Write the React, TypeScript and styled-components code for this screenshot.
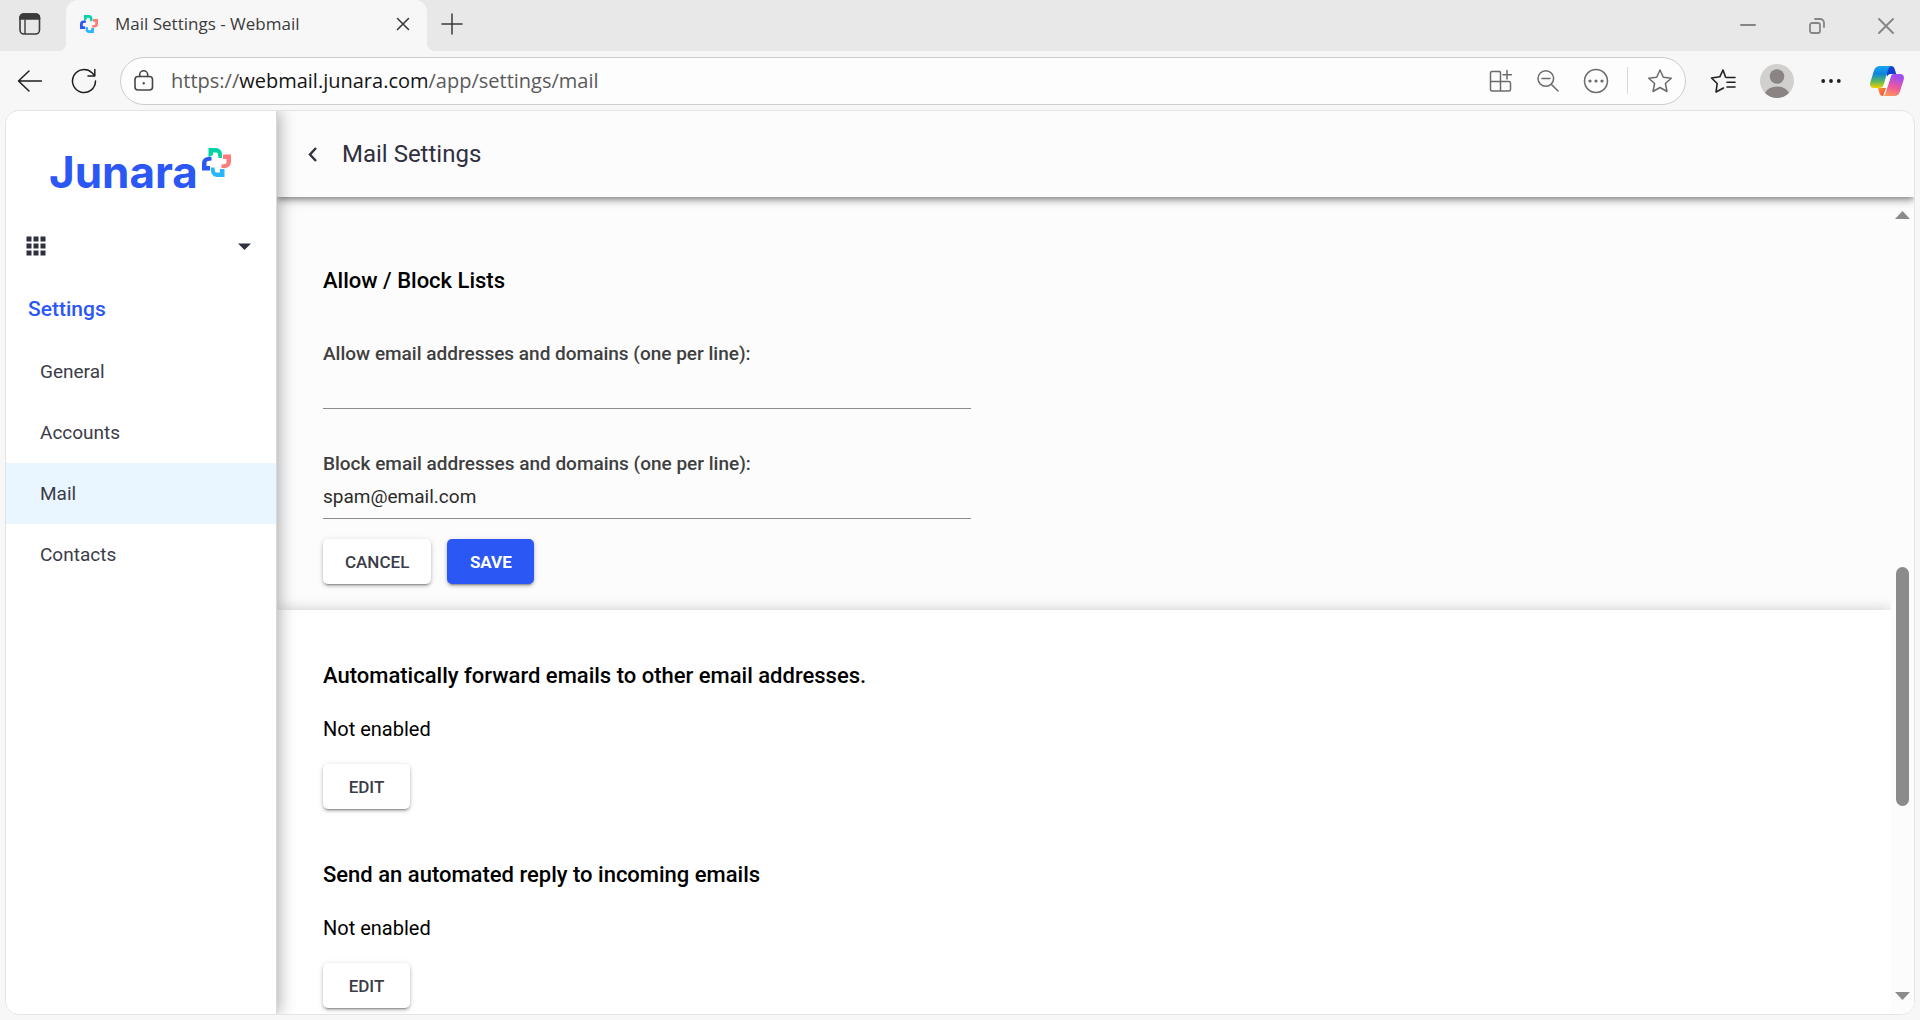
import React from "react";
import styled, { createGlobalStyle, css } from "styled-components";

const GlobalStyle = createGlobalStyle`
  *, *::before, *::after { box-sizing: border-box; }
  html, body, #root { height: 100%; }
  body {
    margin: 0;
    overflow: hidden;
    background: #f7f7f7;
    font-family: Roboto, "Liberation Sans", sans-serif;
    color: #000;
  }
  h1, h2, p { margin: 0; }
  button { font: inherit; border: 0; padding: 0; background: none; color: inherit; cursor: pointer; }
  svg { display: block; flex: none; }
`;

const chromeFont = css`
  font-family: "Open Sans", "Noto Sans", sans-serif;
`;

const Window = styled.div`
  display: flex;
  flex-direction: column;
  height: 100vh;
  background: #f7f7f7;
`;

/* ---------- tab strip ---------- */

const TabStrip = styled.div`
  display: flex;
  flex: none;
  height: 51px;
  background: #e8e8e8;
  color: #3b3b3b;
`;

const IconButton = styled.button<{ $width: number }>`
  display: flex;
  flex: none;
  align-items: center;
  justify-content: center;
  width: ${(p) => p.$width}px;
`;

const StripButton = styled(IconButton)`
  height: 47px;
`;

const TabCorner = styled.div<{ $side: "left" | "right" }>`
  align-self: flex-end;
  width: 8px;
  height: 8px;
  background: radial-gradient(
    circle at ${(p) => (p.$side === "left" ? "0 0" : "100% 0")},
    #e8e8e8 8px,
    #f7f7f7 8px
  );
`;

const Tab = styled.div`
  display: flex;
  align-items: center;
  width: 361px;
  padding: 0 16px 4px 14px;
  border-radius: 12px 12px 0 0;
  background: #f7f7f7;
`;

const TabTitle = styled.span`
  ${chromeFont}
  flex: 1;
  margin-left: 17px;
  font-size: 17px;
  line-height: 24px;
`;

const WindowControls = styled.div`
  display: flex;
  margin-left: auto;
  color: #858585;
`;

/* ---------- address bar ---------- */

const Toolbar = styled.div`
  display: flex;
  flex: none;
  align-items: center;
  height: 59px;
  padding-right: 4px;
  color: #1f1f1f;
`;

const AddressBar = styled.div`
  display: flex;
  flex: 1;
  align-items: center;
  height: 48px;
  margin: 0 10px;
  border: 1px solid #cdcdcd;
  border-radius: 24px;
  background: #fdfdfd;
  color: #6b6b6b;
`;

const SiteInfoButton = styled(IconButton)`
  color: #454545;
`;

const Url = styled.a`
  ${chromeFont}
  flex: 1;
  margin-left: 4px;
  color: #5a5a5a;
  font-size: 20px;
  line-height: 28px;
  text-decoration: none;
`;

const UrlHost = styled.span`
  color: #141414;
`;

const AddressDivider = styled.div`
  width: 1px;
  height: 27px;
  margin: 0 6px 0 7px;
  background: #d8d8d8;
`;

/* ---------- page frame ---------- */

const Page = styled.main`
  display: flex;
  flex: 1;
  min-height: 0;
  margin: 0 5px 5px;
  border: 1px solid #e4e4e4;
  border-radius: 14px;
  overflow: hidden;
  background: #fff;
`;

const Sidebar = styled.aside`
  position: relative;
  z-index: 3;
  flex: none;
  width: 271px;
  border-right: 1px solid #d9d9d9;
  background: #fff;
  box-shadow: 2px 0 16px rgba(0, 0, 0, 0.34);
`;

const Brand = styled.a`
  display: flex;
  align-items: center;
  gap: 4px;
  height: 110px;
  padding: 12px 0 0 43px;
  color: #2b57f4;
  text-decoration: none;
`;

const BrandName = styled.span`
  font-family: Inter, sans-serif;
  font-weight: 700;
  font-size: 44px;
  line-height: 52px;
`;

const BrandMark = styled.span`
  align-self: flex-start;
  padding-top: 25px;
`;

const AppSwitcher = styled.button`
  display: flex;
  align-items: center;
  justify-content: space-between;
  width: 100%;
  height: 50px;
  padding: 0 25px 0 20px;
  color: #2f303e;
`;

const SidebarTitle = styled.h2`
  padding: 23px 22px 0;
  color: #2b57f4;
  font-weight: 500;
  font-size: 21px;
  line-height: 30px;
`;

const Nav = styled.nav`
  margin-top: 17px;
`;

const NavItem = styled.a<{ $active?: boolean }>`
  display: flex;
  align-items: center;
  height: 61px;
  padding: 0 34px;
  background: ${(p) => (p.$active ? "#e9f6ff" : "transparent")};
  color: #3b3c49;
  font-size: 19px;
  line-height: 24px;
  text-decoration: none;
`;

const Content = styled.div`
  display: flex;
  flex: 1;
  flex-direction: column;
  min-width: 0;
`;

const Header = styled.header`
  position: relative;
  z-index: 2;
  display: flex;
  flex: none;
  align-items: center;
  height: 86px;
  padding: 0 20px;
  background: #fcfcfc;
  color: #2f303e;
  box-shadow: 0 3px 5px -1px rgba(0, 0, 0, 0.3), 0 5px 7px rgba(0, 0, 0, 0.14),
    0 1px 13px rgba(0, 0, 0, 0.12);
`;

const PageTitle = styled.h1`
  margin-left: 14px;
  font-weight: 400;
  font-size: 24px;
  line-height: 32px;
`;

const Scroller = styled.div`
  display: flex;
  flex: 1;
  min-height: 0;
  background: #fcfcfc;
`;

const Sections = styled.div`
  flex: 1;
  min-width: 0;
  overflow: hidden;
`;

const Editing = styled.form`
  padding: 68px 46px 26px;
`;

const SectionTitle = styled.h2`
  font-weight: 500;
  font-size: 22px;
  line-height: 32px;
`;

const Field = styled.div`
  display: flex;
  flex-direction: column;
  max-width: 648px;
  margin-top: 43px;

  & + & { margin-top: 41px; }
`;

const FieldLabel = styled.label`
  color: #3f3f3f;
  font-weight: 500;
  font-size: 19px;
  line-height: 28px;
`;

const FieldInput = styled.textarea`
  height: 41px;
  padding: 5px 0 7px;
  border: 0;
  border-bottom: 1px solid #8c8c8c;
  border-radius: 0;
  outline: 0;
  resize: none;
  overflow: hidden;
  background: transparent;
  color: #2b2b2b;
  font-family: inherit;
  font-size: 19px;
  line-height: 28px;
`;

const Actions = styled.div`
  display: flex;
  gap: 16px;
  margin-top: 20px;
`;

const Button = styled.button<{ $primary?: boolean }>`
  min-width: 87px;
  height: 45px;
  padding: 0 22px;
  border-radius: 5px;
  background: ${(p) => (p.$primary ? "#2b57f4" : "#fff")};
  color: ${(p) => (p.$primary ? "#fff" : "#3b3c49")};
  font-weight: ${(p) => (p.$primary ? 700 : 500)};
  font-size: 17px;
  line-height: 24px;
  text-transform: uppercase;
  box-shadow: 0 4px 1px -3px rgba(0, 0, 0, 0.2), 0 2px 3px rgba(0, 0, 0, 0.24),
    0 1px 6px rgba(0, 0, 0, 0.12);
`;

const Panel = styled.div`
  padding: 50px 46px 45px;
  background: #fff;
  box-shadow: 0 0 14px rgba(0, 0, 0, 0.2);
`;

const Setting = styled.section`
  & + & { margin-top: 50px; }
`;

const Status = styled.p`
  margin: 22px 0 20px;
  font-size: 20px;
  line-height: 30px;
`;

const Scrollbar = styled.div`
  position: relative;
  z-index: 1;
  display: flex;
  flex: none;
  flex-direction: column;
  align-items: center;
  width: 23px;
  padding: 14px 0;
  background: #fcfcfc;
  color: #8b8b8b;
`;

const ScrollTrack = styled.div`
  display: flex;
  flex: 1;
  flex-direction: column;
`;

const TrackSpace = styled.div<{ $weight: number }>`
  flex: ${(p) => p.$weight};
`;

const ScrollThumb = styled.div`
  flex: 239;
  width: 13px;
  border-radius: 7px;
  background: #8b8b8b;
`;

/* ---------- drawings ---------- */

const CrossMark = ({ size }: { size: number }) => (
  <svg width={size} height={size} viewBox="0 0 29 29" aria-hidden="true">
    <path fill="#05d3a5" d="M6.500 0h7.500a6 6 0 0 1 6 6v4h-3.500l-.5-4a1.500 1.500 0 0 0-1.500-1.500h-3.500V7L6.500 9.500z" />
    <path fill="#ff7a7a" d="M21 6.500h8V14a6 6 0 0 1-6 6h-3.500v-3.500l3.500-.5a1.500 1.500 0 0 0 1.500-1.500V11H21z" />
    <path fill="#29b6ff" d="M22.500 21v8H15a6 6 0 0 1-6-6v-3.500h3.500L13 23a1.500 1.500 0 0 0 1.500 1.500H18V21z" />
    <path fill="#2b57f4" d="M8 22.500H0V15a6 6 0 0 1 6-6h3.500v3.500L6 13a1.500 1.500 0 0 0-1.500 1.500V18H8z" />
  </svg>
);

const Stroke = ({
  size,
  width = 2,
  children,
}: {
  size: number;
  width?: number;
  children: React.ReactNode;
}) => (
  <svg
    width={size}
    height={size}
    viewBox={`0 0 ${size} ${size}`}
    fill="none"
    stroke="currentColor"
    strokeWidth={width}
    strokeLinecap="round"
    strokeLinejoin="round"
    aria-hidden="true"
  >
    {children}
  </svg>
);

const TabActionsIcon = () => (
  <Stroke size={24} width={1.6}>
    <rect x="3" y="2" width="19.500" height="20" rx="4" />
    <path d="M3 7V5.500A3.500 3.500 0 0 1 6.500 2h12.500A3.500 3.500 0 0 1 22.500 5.500V7z" fill="currentColor" />
    <path d="M8 8v13.500" strokeWidth="1.400" />
  </Stroke>
);

const BackIcon = () => (
  <Stroke size={26} width={1.5}>
    <path d="M25.500 13H2.500M13 3L2.500 13 13 23" />
  </Stroke>
);

const ReloadIcon = () => (
  <Stroke size={26} width={1.5}>
    <path d="M24.500 13a11.500 11.500 0 1 1-3.500-8.200L23.500 7.500M23.800 1.500V8h-6.800" />
  </Stroke>
);

const LockIcon = () => (
  <Stroke size={22} width={1.6}>
    <rect x="2" y="6.500" width="17.500" height="13.500" rx="3" />
    <path d="M6.700 6.500V4.800a4 4 0 0 1 8 0v1.700" />
    <circle cx="10.700" cy="13.300" r="0.800" fill="currentColor" strokeWidth="1" />
  </Stroke>
);

const AppsIcon = () => (
  <Stroke size={24} width={1.5}>
    <path d="M12 2.500H4A1.500 1.500 0 0 0 2.500 4v16.500A1.500 1.500 0 0 0 4 22h17a1.500 1.500 0 0 0 1.500-1.500V14A1.500 1.500 0 0 0 21 12.500H2.500M12.500 22V4A1.500 1.500 0 0 0 11 2.500" />
    <path d="M19 1.500v8.500M15 5.700h8.500" />
  </Stroke>
);

const ZoomOutIcon = () => (
  <Stroke size={24} width={1.5}>
    <circle cx="9.800" cy="9.500" r="7.800" />
    <path d="M15.500 15.500L22 22M6 9.500h8" />
  </Stroke>
);

const MoreCircleIcon = () => (
  <Stroke size={26} width={1.5}>
    <circle cx="13" cy="13" r="11.500" />
    <g fill="currentColor" stroke="none">
      <circle cx="7" cy="13" r="1.600" />
      <circle cx="13" cy="13" r="1.600" />
      <circle cx="19" cy="13" r="1.600" />
    </g>
  </Stroke>
);

const StarIcon = () => (
  <Stroke size={26} width={1.5}>
    <path d="M13 2l3.300 7.200 8 1-5.900 5.300L20 23.500l-7-4-7 4 1.600-8-5.900-5.300 8-1z" />
  </Stroke>
);

const FavoritesIcon = () => (
  <Stroke size={26} width={1.6}>
    <path d="M16.500 9.500h8.500M17 14.200h8M17 19h8" />
    <path d="M15.500 9L13 2 9.800 8.800 1.500 10l5.700 5.500L6 24l7.500-4" />
  </Stroke>
);

const AvatarIcon = () => (
  <svg width="34" height="34" viewBox="0 0 34 34" aria-hidden="true">
    <circle cx="17" cy="17" r="17" fill="#d2d0ce" />
    <circle cx="17" cy="12.500" r="7.300" fill="#8a8583" />
    <path d="M5 29a12.500 9 0 0 1 24 0 17 17 0 0 1-24 0z" fill="#8a8583" />
  </svg>
);

const DotsIcon = () => (
  <svg width="20" height="6" viewBox="0 0 20 6" fill="currentColor" aria-hidden="true">
    <circle cx="2.200" cy="3" r="1.900" />
    <circle cx="10" cy="3" r="1.900" />
    <circle cx="17.800" cy="3" r="1.900" />
  </svg>
);

const CopilotIcon = () => (
  <svg width="34" height="32" viewBox="0 0 34 32" aria-hidden="true">
    <defs>
      <linearGradient id="cp-left" x1="0" y1="0" x2="0" y2="1">
        <stop offset="0" stopColor="#1aa5ee" />
        <stop offset="0.350" stopColor="#0b84df" />
        <stop offset="0.700" stopColor="#5cb85c" />
        <stop offset="1" stopColor="#f5d000" />
      </linearGradient>
      <linearGradient id="cp-right" x1="0.300" y1="0" x2="0" y2="1">
        <stop offset="0" stopColor="#a24df0" />
        <stop offset="0.500" stopColor="#ef5a9a" />
        <stop offset="1" stopColor="#ffa24d" />
      </linearGradient>
      <linearGradient id="cp-foot" x1="0" y1="0" x2="1" y2="1">
        <stop offset="0" stopColor="#ff9a2e" />
        <stop offset="1" stopColor="#ee4040" />
      </linearGradient>
    </defs>
    <path fill="#1540cf" d="M16 1h5c2 0 3 1 3.700 3l1.500 5H21c-2 0-3 1-4 3z" />
    <path fill="url(#cp-foot)" d="M8 23h8l-3 8c-2 0-3-1-3.600-3z" />
    <path fill="url(#cp-left)" d="M10 1h12c-2 0-3 1-4 4l-4.500 15c-.7 2.300-2 3-4 3H4c-3.500 0-4.600-2.500-3.600-6L4 5.500C5 2.500 7 1 10 1z" />
    <path fill="url(#cp-right)" d="M24 9h6c3.500 0 4.600 2.500 3.600 6L30 26.500c-1 3-3 4.500-6 4.500H12c2 0 3-1 4-4l4.500-15c.7-2.300 1.500-3 3.500-3z" />
    <path fill="#fff" d="M21.500 9.500h-1.200c-1.800 0-2.800 1-3.300 2.800L13.500 22.800h1.200c1.800 0 2.800-1 3.300-2.800z" />
  </svg>
);

const GridIcon = () => (
  <svg width="20" height="20" viewBox="0 0 20 20" fill="currentColor" aria-hidden="true">
    {[0, 7, 14].map((y) =>
      [0, 7, 14].map((x) => <rect key={`${x}-${y}`} x={x + 0.5} y={y + 0.5} width="5" height="5" />)
    )}
  </svg>
);

const CaretIcon = () => (
  <svg width="13" height="7" viewBox="0 0 13 7" fill="currentColor" aria-hidden="true">
    <path d="M0 0.500h13L6.500 7z" />
  </svg>
);

const ArrowIcon = ({ up }: { up?: boolean }) => (
  <svg width="15" height="8" viewBox="0 0 15 8" fill="currentColor" aria-hidden="true">
    <path d={up ? "M0 8h15L7.500 0z" : "M0 0h15L7.500 8z"} />
  </svg>
);

/* ---------- page ---------- */

const navItems = ["General", "Accounts", "Mail", "Contacts"];

const settings = [
  "Automatically forward emails to other email addresses.",
  "Send an automated reply to incoming emails",
];

export default function App() {
  return (
    <Window>
      <GlobalStyle />
      <TabStrip>
        <StripButton $width={58} aria-label="Tab actions">
          <TabActionsIcon />
        </StripButton>
        <TabCorner $side="left" />
        <Tab>
          <CrossMark size={18} />
          <TabTitle>Mail Settings - Webmail</TabTitle>
          <IconButton $width={16} aria-label="Close tab">
            <Stroke size={14} width={1.6}>
              <path d="M1.500 1.500l11 11M12.500 1.500l-11 11" />
            </Stroke>
          </IconButton>
        </Tab>
        <TabCorner $side="right" />
        <StripButton $width={34} aria-label="New tab">
          <Stroke size={22} width={1.5}>
            <path d="M11 1v20M1 11h20" />
          </Stroke>
        </StripButton>
        <WindowControls>
          <IconButton $width={69} aria-label="Minimize">
            <Stroke size={16}>
              <path d="M1 7h14" />
            </Stroke>
          </IconButton>
          <IconButton $width={69} aria-label="Restore">
            <Stroke size={16} width={1.8}>
              <rect x="1" y="5" width="10" height="10" rx="2" />
              <path d="M6 1h5a4 4 0 0 1 4 4v4" />
            </Stroke>
          </IconButton>
          <IconButton $width={69} aria-label="Close">
            <Stroke size={16} width={1.8}>
              <path d="M1 1l14 14M15 1L1 15" />
            </Stroke>
          </IconButton>
        </WindowControls>
      </TabStrip>

      <Toolbar>
        <IconButton $width={58} aria-label="Back">
          <BackIcon />
        </IconButton>
        <IconButton $width={52} aria-label="Reload">
          <ReloadIcon />
        </IconButton>
        <AddressBar>
          <SiteInfoButton $width={46} aria-label="Site information">
            <LockIcon />
          </SiteInfoButton>
          <Url href="https://webmail.junara.com/app/settings/mail">
            https://<UrlHost>webmail.junara.com</UrlHost>/app/settings/mail
          </Url>
          <IconButton $width={48} aria-label="Install app">
            <AppsIcon />
          </IconButton>
          <IconButton $width={48} aria-label="Zoom out">
            <ZoomOutIcon />
          </IconButton>
          <IconButton $width={48} aria-label="More">
            <MoreCircleIcon />
          </IconButton>
          <AddressDivider />
          <IconButton $width={51} aria-label="Add to favorites">
            <StarIcon />
          </IconButton>
        </AddressBar>
        <IconButton $width={54} aria-label="Favorites">
          <FavoritesIcon />
        </IconButton>
        <IconButton $width={54} aria-label="Profile">
          <AvatarIcon />
        </IconButton>
        <IconButton $width={54} aria-label="Settings and more">
          <DotsIcon />
        </IconButton>
        <IconButton $width={58} aria-label="Copilot">
          <CopilotIcon />
        </IconButton>
      </Toolbar>

      <Page>
        <Sidebar>
          <Brand href="#home">
            <BrandName>Junara</BrandName>
            <BrandMark>
              <CrossMark size={29} />
            </BrandMark>
          </Brand>
          <AppSwitcher aria-label="Switch app">
            <GridIcon />
            <CaretIcon />
          </AppSwitcher>
          <SidebarTitle>Settings</SidebarTitle>
          <Nav>
            {navItems.map((item) => (
              <NavItem key={item} href={`#${item.toLowerCase()}`} $active={item === "Mail"}>
                {item}
              </NavItem>
            ))}
          </Nav>
        </Sidebar>

        <Content>
          <Header>
            <IconButton $width={31} aria-label="Back to settings">
              <Stroke size={16} width={2.4}>
                <path d="M11 2L5 8.500l6 6.500" strokeLinecap="butt" strokeLinejoin="miter" />
              </Stroke>
            </IconButton>
            <PageTitle>Mail Settings</PageTitle>
          </Header>
          <Scroller>
            <Sections>
              <Editing onSubmit={(e) => e.preventDefault()}>
                <SectionTitle>Allow / Block Lists</SectionTitle>
                <Field>
                  <FieldLabel htmlFor="allow">Allow email addresses and domains (one per line):</FieldLabel>
                  <FieldInput id="allow" rows={1} />
                </Field>
                <Field>
                  <FieldLabel htmlFor="block">Block email addresses and domains (one per line):</FieldLabel>
                  <FieldInput id="block" rows={1} defaultValue="spam@email.com" spellCheck={false} />
                </Field>
                <Actions>
                  <Button type="button">Cancel</Button>
                  <Button type="submit" $primary>
                    Save
                  </Button>
                </Actions>
              </Editing>
              <Panel>
                {settings.map((title) => (
                  <Setting key={title}>
                    <SectionTitle>{title}</SectionTitle>
                    <Status>Not enabled</Status>
                    <Button type="button">Edit</Button>
                  </Setting>
                ))}
              </Panel>
            </Sections>
            <Scrollbar aria-hidden="true">
              <ArrowIcon up />
              <ScrollTrack>
                <TrackSpace $weight={348} />
                <ScrollThumb />
                <TrackSpace $weight={186} />
              </ScrollTrack>
              <ArrowIcon />
            </Scrollbar>
          </Scroller>
        </Content>
      </Page>
    </Window>
  );
}
